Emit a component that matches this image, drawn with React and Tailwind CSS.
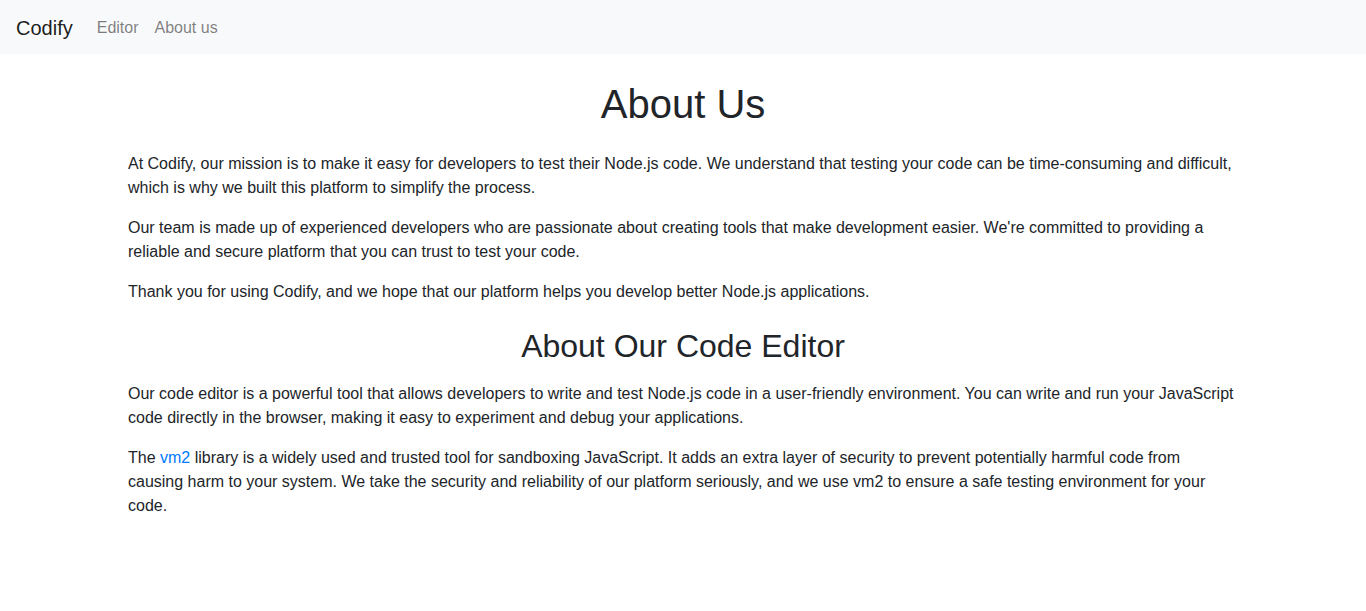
export default function App() {
  return (
    <div className="min-h-screen bg-white text-[#212529] font-['Liberation_Sans',Arial,sans-serif] text-base leading-6">
      <nav className="flex items-center h-[54px] px-4 pt-[2px] bg-[#f8f9fa]">
        <a href="#" className="mr-4 text-[20px] leading-[30px] text-[rgba(0,0,0,0.9)]">Codify</a>
        <div className="flex">
          <a href="#" className="px-2 text-[rgba(0,0,0,0.5)]">Editor</a>
          <a href="#" className="px-2 text-[rgba(0,0,0,0.5)]">About us</a>
        </div>
      </nav>

      <main className="max-w-[1140px] mx-auto px-[15px] pt-[26px]">
        <h1 className="text-center text-[40px] leading-[48px] font-medium mb-6">About Us</h1>
        <p className="mb-4">
          At Codify, our mission is to make it easy for developers to test their Node.js code. We understand that testing your code can be time-consuming and difficult, which is why we built this platform to simplify the process.
        </p>
        <p className="mb-4">
          Our team is made up of experienced developers who are passionate about creating tools that make development easier. We're committed to providing a reliable and secure platform that you can trust to test your code.
        </p>
        <p className="mb-4">
          Thank you for using Codify, and we hope that our platform helps you develop better Node.js applications.
        </p>

        <h2 className="text-center text-[32px] leading-[38px] font-medium mt-[23px] mb-[17px]">About Our Code Editor</h2>
        <p className="mb-4">
          Our code editor is a powerful tool that allows developers to write and test Node.js code in a user-friendly environment. You can write and run your JavaScript code directly in the browser, making it easy to experiment and debug your applications.
        </p>
        <p className="mb-4">
          The <a href="#" className="text-[#007bff]">vm2</a> library is a widely used and trusted tool for sandboxing JavaScript. It adds an extra layer of security to prevent potentially harmful code from causing harm to your system. We take the security and reliability of our platform seriously, and we use vm2 to ensure a safe testing environment for your code.
        </p>
      </main>
    </div>
  );
}
